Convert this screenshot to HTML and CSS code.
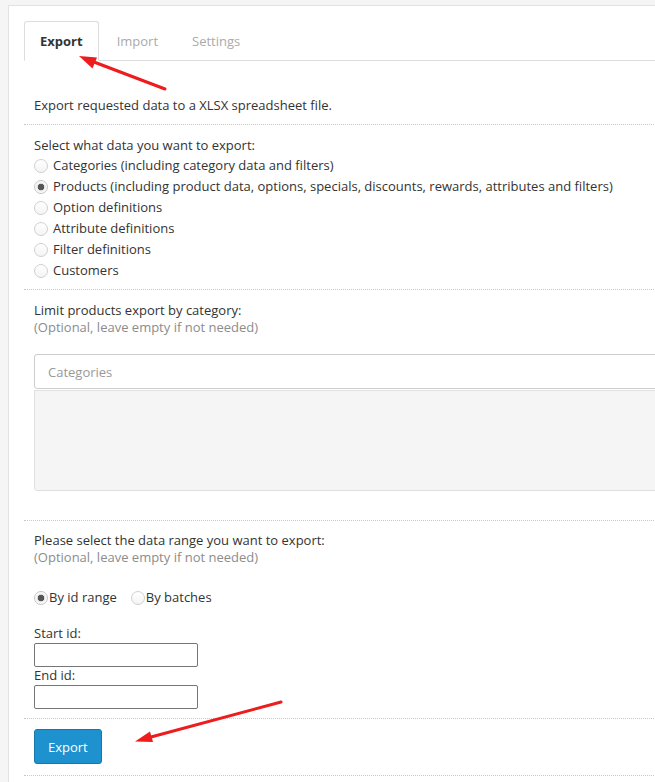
FILE: index.html
```html
<!DOCTYPE html>
<html>
<head>
<meta charset="utf-8">
<link rel="stylesheet" href="styles.css">
</head>
<body>
<div class="page">
  <ul class="tabs">
    <li class="tab active">Export</li>
    <li class="tab">Import</li>
    <li class="tab">Settings</li>
  </ul>
  <div class="sec sec-first">Export requested data to a XLSX spreadsheet file.</div>
  <div class="sec sec-radios">
    <div class="line">Select what data you want to export:</div>
    <label class="opt"><input class="radio" type="radio" name="type">Categories (including category data and filters)</label>
    <label class="opt"><input class="radio" type="radio" name="type" checked>Products (including product data, options, specials, discounts, rewards, attributes and filters)</label>
    <label class="opt"><input class="radio" type="radio" name="type">Option definitions</label>
    <label class="opt"><input class="radio" type="radio" name="type">Attribute definitions</label>
    <label class="opt"><input class="radio" type="radio" name="type">Filter definitions</label>
    <label class="opt"><input class="radio" type="radio" name="type">Customers</label>
  </div>
  <div class="sec sec-cat">
    <div class="line">Limit products export by category:</div>
    <div class="line note">(Optional, leave empty if not needed)</div>
    <input class="catinput" type="text" placeholder="Categories">
    <div class="catbox"></div>
  </div>
  <div class="sec sec-range">
    <div class="line">Please select the data range you want to export:</div>
    <div class="line note">(Optional, leave empty if not needed)</div>
    <div class="inline-row">
      <label class="opt-inline"><input class="radio radio-tight" type="radio" name="range" checked>By id range</label>
      <label class="opt-inline opt-next"><input class="radio radio-tight" type="radio" name="range">By batches</label>
    </div>
    <div class="field-label field-first">Start id:</div>
    <input class="idinput" type="text">
    <div class="field-label">End id:</div>
    <input class="idinput" type="text">
  </div>
  <div class="sec sec-btn">
    <button class="btn" type="button">Export</button>
  </div>
</div>
<svg class="arrows" width="655" height="782" viewBox="0 0 655 782">
  <line x1="165" y1="89" x2="94" y2="62" stroke="#ee1c1c" stroke-width="3" stroke-linecap="round"/>
  <polygon points="79,56 97,57.5 92.5,68.5" fill="#ee1c1c"/>
  <line x1="281" y1="702" x2="151" y2="737" stroke="#ee1c1c" stroke-width="3" stroke-linecap="round"/>
  <polygon points="135,741.5 150,731.5 153,742" fill="#ee1c1c"/>
</svg>
</body>
</html>
```

FILE: styles.css
```css
html, body {
  margin: 0;
  padding: 0;
}
body {
  background: #f5f5f5;
  font-family: "Open Sans", "DejaVu Sans", sans-serif;
  font-size: 13px;
  color: #333;
  overflow: hidden;
  width: 655px;
  height: 782px;
  position: relative;
}
.page {
  margin: 5px 0 0 8px;
  width: 720px;
  min-height: 800px;
  background: #fff;
  border-top: 1px solid #e2e2e2;
  border-left: 1px solid #e2e2e2;
  padding: 15px 0 0 15px;
}
.tabs {
  display: flex;
  list-style: none;
  margin: 0 0 24px;
  padding: 0;
  border-bottom: 1px solid #ddd;
}
.tab {
  margin: 0 2px -1px 0;
  padding: 10px 15px;
  line-height: 18px;
  border: 1px solid transparent;
  border-radius: 3px 3px 0 0;
  color: #aaa;
}
.tab.active {
  border-color: #ddd #ddd transparent;
  background: #fff;
  color: #333;
  font-weight: bold;
}
.sec {
  padding: 11px 10px 10px;
  border-bottom: 1px dotted #c8c8c8;
  line-height: 17px;
}
.sec-first {
  padding-top: 12px;
  padding-bottom: 10px;
}
.sec-radios {
  padding-top: 12px;
  padding-bottom: 8px;
}
.sec-radios .line {
  height: 18px;
}
.sec-cat {
  padding-top: 12px;
  padding-bottom: 9px;
}
.sec-range {
  padding-top: 11px;
  padding-bottom: 9px;
}
.sec-btn {
  padding: 10px 10px 11px;
}
.line {
  height: 17px;
}
.note {
  color: #8c8c8c;
}
.opt {
  display: flex;
  align-items: center;
  height: 21px;
}
.radio {
  appearance: none;
  -webkit-appearance: none;
  box-sizing: border-box;
  width: 14px;
  height: 14px;
  margin: 0 5px 0 0;
  border: 1px solid #d0d0d0;
  border-radius: 50%;
  background: linear-gradient(#fff, #f4f4f4);
  flex: none;
}
.radio:checked {
  border-color: #c4c4c4;
  background: radial-gradient(circle, #555 0, #555 3px, #e9e9e9 3.6px, #fff 6px);
}
.radio-tight {
  margin-right: 1px;
}
.catinput {
  display: block;
  box-sizing: border-box;
  width: 700px;
  height: 35px;
  margin: 18px 0 0;
  padding: 0 13px;
  border: 1px solid #ccc;
  border-radius: 3px;
  font-family: inherit;
  font-size: 13px;
  color: #555;
}
.catinput::placeholder {
  color: #999;
}
.catbox {
  box-sizing: border-box;
  width: 700px;
  height: 101px;
  margin: 1px 0 20px;
  background: #f5f5f5;
  border: 1px solid #e0e0e0;
  border-radius: 0 0 3px 3px;
}
.inline-row {
  display: flex;
  align-items: center;
  height: 21px;
  margin-top: 21px;
}
.opt-inline {
  display: flex;
  align-items: center;
}
.opt-next {
  margin-left: 14px;
}
.field-label {
  height: 17px;
  line-height: 17px;
  padding-bottom: 1px;
}
.field-first {
  margin-top: 17px;
}
.idinput {
  display: block;
  box-sizing: border-box;
  width: 164px;
  height: 24px;
  margin: 0;
  border: 1px solid #767676;
  border-radius: 2px;
  font-family: inherit;
  font-size: 13px;
}
.btn {
  display: block;
  box-sizing: border-box;
  height: 35px;
  padding: 0 13px;
  background: #1e91cf;
  border: 1px solid #1978ab;
  border-radius: 3px;
  color: #fff;
  font-family: inherit;
  font-size: 13px;
}
.arrows {
  position: absolute;
  top: 0;
  left: 0;
  pointer-events: none;
}
```
